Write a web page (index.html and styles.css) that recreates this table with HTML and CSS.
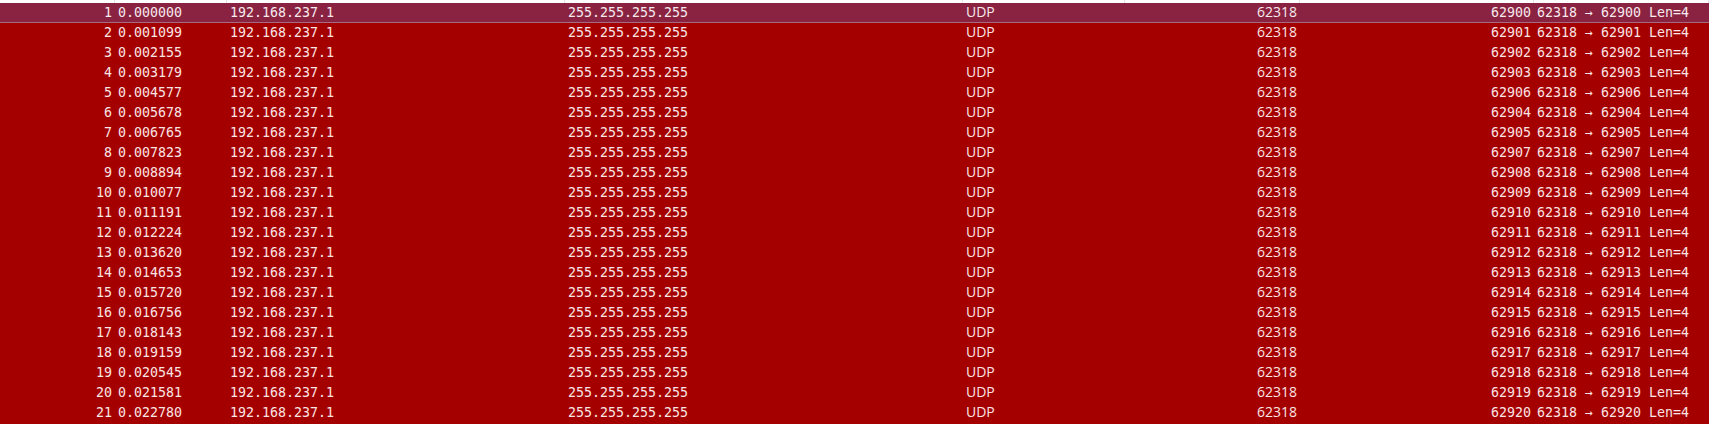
FILE: index.html
```html
<!DOCTYPE html>
<html lang="en">
<head>
    <meta charset="UTF-8">
    <title>Packet List</title>
    <link rel="stylesheet" href="styles.css">
</head>
<body>
    <div class="packet-list">
        <!-- header bottom edge -->
        <div class="row header">
            <div></div><div></div><div></div><div></div><div></div><div></div><div></div><div></div>
        </div>
        <div class="row selected"><div class="num">1</div><div>0.000000</div><div>192.168.237.1</div><div>255.255.255.255</div><div class="sans">UDP</div><div class="sans right">62318</div><div class="right">62900</div><div>62318 → 62900 Len=4</div></div>
        <div class="row"><div class="num">2</div><div>0.001099</div><div>192.168.237.1</div><div>255.255.255.255</div><div class="sans">UDP</div><div class="sans right">62318</div><div class="right">62901</div><div>62318 → 62901 Len=4</div></div>
        <div class="row"><div class="num">3</div><div>0.002155</div><div>192.168.237.1</div><div>255.255.255.255</div><div class="sans">UDP</div><div class="sans right">62318</div><div class="right">62902</div><div>62318 → 62902 Len=4</div></div>
        <div class="row"><div class="num">4</div><div>0.003179</div><div>192.168.237.1</div><div>255.255.255.255</div><div class="sans">UDP</div><div class="sans right">62318</div><div class="right">62903</div><div>62318 → 62903 Len=4</div></div>
        <div class="row"><div class="num">5</div><div>0.004577</div><div>192.168.237.1</div><div>255.255.255.255</div><div class="sans">UDP</div><div class="sans right">62318</div><div class="right">62906</div><div>62318 → 62906 Len=4</div></div>
        <div class="row"><div class="num">6</div><div>0.005678</div><div>192.168.237.1</div><div>255.255.255.255</div><div class="sans">UDP</div><div class="sans right">62318</div><div class="right">62904</div><div>62318 → 62904 Len=4</div></div>
        <div class="row"><div class="num">7</div><div>0.006765</div><div>192.168.237.1</div><div>255.255.255.255</div><div class="sans">UDP</div><div class="sans right">62318</div><div class="right">62905</div><div>62318 → 62905 Len=4</div></div>
        <div class="row"><div class="num">8</div><div>0.007823</div><div>192.168.237.1</div><div>255.255.255.255</div><div class="sans">UDP</div><div class="sans right">62318</div><div class="right">62907</div><div>62318 → 62907 Len=4</div></div>
        <div class="row"><div class="num">9</div><div>0.008894</div><div>192.168.237.1</div><div>255.255.255.255</div><div class="sans">UDP</div><div class="sans right">62318</div><div class="right">62908</div><div>62318 → 62908 Len=4</div></div>
        <div class="row"><div class="num">10</div><div>0.010077</div><div>192.168.237.1</div><div>255.255.255.255</div><div class="sans">UDP</div><div class="sans right">62318</div><div class="right">62909</div><div>62318 → 62909 Len=4</div></div>
        <div class="row"><div class="num">11</div><div>0.011191</div><div>192.168.237.1</div><div>255.255.255.255</div><div class="sans">UDP</div><div class="sans right">62318</div><div class="right">62910</div><div>62318 → 62910 Len=4</div></div>
        <div class="row"><div class="num">12</div><div>0.012224</div><div>192.168.237.1</div><div>255.255.255.255</div><div class="sans">UDP</div><div class="sans right">62318</div><div class="right">62911</div><div>62318 → 62911 Len=4</div></div>
        <div class="row"><div class="num">13</div><div>0.013620</div><div>192.168.237.1</div><div>255.255.255.255</div><div class="sans">UDP</div><div class="sans right">62318</div><div class="right">62912</div><div>62318 → 62912 Len=4</div></div>
        <div class="row"><div class="num">14</div><div>0.014653</div><div>192.168.237.1</div><div>255.255.255.255</div><div class="sans">UDP</div><div class="sans right">62318</div><div class="right">62913</div><div>62318 → 62913 Len=4</div></div>
        <div class="row"><div class="num">15</div><div>0.015720</div><div>192.168.237.1</div><div>255.255.255.255</div><div class="sans">UDP</div><div class="sans right">62318</div><div class="right">62914</div><div>62318 → 62914 Len=4</div></div>
        <div class="row"><div class="num">16</div><div>0.016756</div><div>192.168.237.1</div><div>255.255.255.255</div><div class="sans">UDP</div><div class="sans right">62318</div><div class="right">62915</div><div>62318 → 62915 Len=4</div></div>
        <div class="row"><div class="num">17</div><div>0.018143</div><div>192.168.237.1</div><div>255.255.255.255</div><div class="sans">UDP</div><div class="sans right">62318</div><div class="right">62916</div><div>62318 → 62916 Len=4</div></div>
        <div class="row"><div class="num">18</div><div>0.019159</div><div>192.168.237.1</div><div>255.255.255.255</div><div class="sans">UDP</div><div class="sans right">62318</div><div class="right">62917</div><div>62318 → 62917 Len=4</div></div>
        <div class="row"><div class="num">19</div><div>0.020545</div><div>192.168.237.1</div><div>255.255.255.255</div><div class="sans">UDP</div><div class="sans right">62318</div><div class="right">62918</div><div>62318 → 62918 Len=4</div></div>
        <div class="row"><div class="num">20</div><div>0.021581</div><div>192.168.237.1</div><div>255.255.255.255</div><div class="sans">UDP</div><div class="sans right">62318</div><div class="right">62919</div><div>62318 → 62919 Len=4</div></div>
        <div class="row"><div class="num">21</div><div>0.022780</div><div>192.168.237.1</div><div>255.255.255.255</div><div class="sans">UDP</div><div class="sans right">62318</div><div class="right">62920</div><div>62318 → 62920 Len=4</div></div>
    </div>
</body>
</html>
```

FILE: styles.css
```css
body {
    margin: 0;
    padding: 0;
    background-color: #a40000;
    overflow: hidden;
}
.packet-list {
    font-family: 'DejaVu Sans Mono', 'Liberation Mono', monospace;
    font-size: 13.3px;
    color: #fbe4e4;
}
.row {
    display: grid;
    grid-template-columns: 115px 112px 338px 398px 162px 175px 234px 1fr;
    height: 20px;
    line-height: 20px;
    background-color: #a40000;
    white-space: nowrap;
}
.row > div {
    padding: 0 3px;
    overflow: hidden;
}
.row.header {
    height: 3px;
    background-color: #ffffff;
}
.row.header > div {
    border-right: 1px solid #e3e3e3;
}
.row.selected {
    background-color: #8a2241;
    box-shadow: inset 0 -1px 0 #a86a7c;
    color: #f6eaee;
}
.num {
    text-align: right;
}
.right {
    text-align: right;
}
.sans {
    font-family: 'Open Sans', 'Noto Sans', sans-serif;
    font-size: 14px;
    line-height: 18px;
}
```
